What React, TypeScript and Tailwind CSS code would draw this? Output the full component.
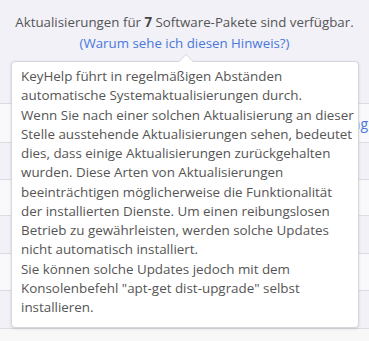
import React from "react";

const lines = [
  "KeyHelp führt in regelmäßigen Abständen",
  "automatische Systemaktualisierungen durch.",
  "Wenn Sie nach einer solchen Aktualisierung an dieser",
  "Stelle ausstehende Aktualisierungen sehen, bedeutet",
  "dies, dass einige Aktualisierungen zurückgehalten",
  "wurden. Diese Arten von Aktualisierungen",
  "beeinträchtigen möglicherweise die Funktionalität",
  "der installierten Dienste. Um einen reibungslosen",
  "Betrieb zu gewährleisten, werden solche Updates",
  "nicht automatisch installiert.",
  "Sie können solche Updates jedoch mit dem",
  'Konsolenbefehl "apt-get dist-upgrade" selbst',
  "installieren.",
];

const rows = [
  { h: "h-[39px]", bg: "bg-[#f9f9fb]" },
  { h: "h-[37px]", bg: "bg-[#f1f1f7]" },
  { h: "h-[36px]", bg: "bg-[#f9f9fb]" },
  { h: "h-[38px]", bg: "bg-[#f1f1f7]" },
  { h: "h-[37px]", bg: "bg-[#f9f9fb]" },
  { h: "h-[38px]", bg: "bg-[#f1f1f7]" },
];

export default function App() {
  return (
    <div
      className="relative w-[369px] h-[341px] overflow-hidden bg-[#f8f8f8] text-[#555]"
      style={{ fontFamily: '"Open Sans", "Noto Sans", sans-serif' }}
    >
      <div className="h-[103px] bg-[#f1f1f7] pt-[12px] text-center text-[13.3px] leading-[21px]">
        <div className="whitespace-nowrap">
          Aktualisierungen für <b className="font-bold text-[#444]">7</b> Software-Pakete sind verfügbar.
        </div>
        <div className="whitespace-nowrap text-[#4a78dc]">(Warum sehe ich diesen Hinweis?)</div>
      </div>
      <div className="border-b border-[#dcdce2]">
        {rows.map((r, i) => (
          <div
            key={i}
            className={`${r.h} ${r.bg} border-t border-[#dcdce2] flex items-center justify-end pr-[1px] text-[14px]`}
          >
            {i === 0 ? <span className="text-[#4a78dc]">ng</span> : null}
          </div>
        ))}
      </div>

      <div className="absolute left-[11px] top-[61px] w-[348px] h-[267px] bg-white border border-[#d6d6dc] rounded-[4px] shadow-[0_1px_3px_rgba(0,0,0,0.12)] pl-[9px] pt-[5px] text-[13.4px] leading-[19.25px] text-[#555]">
        <div className="absolute left-[166px] -top-[8px] w-0 h-0 border-l-[8px] border-r-[8px] border-b-[8px] border-l-transparent border-r-transparent border-b-[#d6d6dc]" />
        <div className="absolute left-[167px] -top-[7px] w-0 h-0 border-l-[7px] border-r-[7px] border-b-[7px] border-l-transparent border-r-transparent border-b-white" />
        {lines.map((l, i) => (
          <div key={i} className="whitespace-nowrap">
            {l}
          </div>
        ))}
      </div>
    </div>
  );
}
